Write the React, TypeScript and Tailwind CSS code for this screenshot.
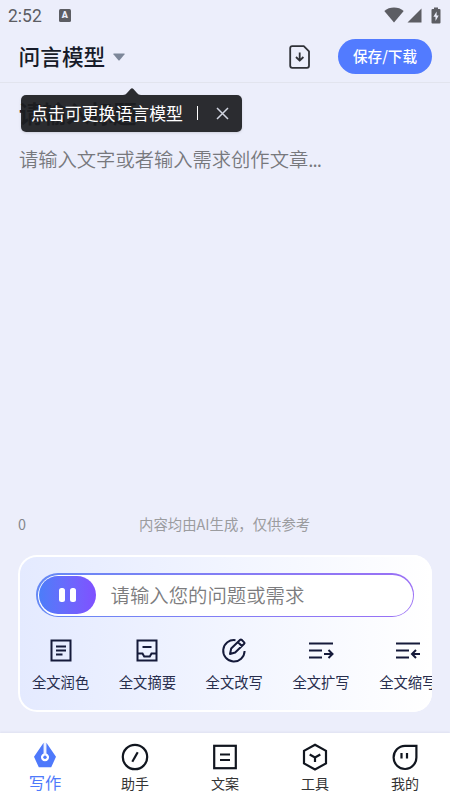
import React from 'react';

const ChevronFill = () => (
  <svg width="12" height="8" viewBox="0 0 12 8" fill="#7d8799">
    <path d="M0.8 0.5h10.4a.5.5 0 0 1 .4.8L6.6 7.2a.8.8 0 0 1-1.2 0L.4 1.3A.5.5 0 0 1 .8.5z" />
  </svg>
);

const StatusBar = () => {
  return (
    <div className="flex h-[30px] items-center pl-2 pr-[9px] text-[#5c5d63]">
      <span className="mt-[3px] font-[Roboto] text-[17.5px] leading-none">2:52</span>
      <div className="ml-[17px] flex h-[13px] w-3 items-center justify-center rounded-[1.5px] bg-[#5c5d63]">
        <span className="font-[Roboto] text-[9px] font-black leading-none text-[#eceefb]">A</span>
      </div>
      <div className="ml-auto flex items-center">
        <svg width="20" height="16" viewBox="0 0 20 16" fill="currentColor">
          <path d="M10 15.5L.3 3.9C3 1.7 6.3.5 10 .5s7 1.2 9.7 3.4z" />
        </svg>
        <svg className="ml-[3px]" width="15" height="15" viewBox="0 0 15 15" fill="currentColor">
          <path d="M14.5 .5v14H.5z" />
        </svg>
        <svg className="ml-[9px]" width="10" height="17" viewBox="0 0 10 17" fill="currentColor">
          <path d="M3 .5h4v1.5h1.5q1 0 1 1v12.5q0 1-1 1h-7q-1 0-1-1V3q0-1 1-1H3z" />
          <path d="M5.6 4.5L2.400 9.800h2.100v4.200l3.200-5.500H5.600z" fill="#eceefb" />
        </svg>
      </div>
    </div>
  );
};

const Header = () => {
  return (
    <header className="relative flex h-[53px] items-center border-b border-[#e2e4ee] pl-[18.5px] pr-[18px]">
      <h1 className="text-[21.7px] font-medium leading-none text-[#171b29]">问言模型</h1>
      <div className="ml-[7.5px] mt-px">
        <ChevronFill />
      </div>
      <svg className="ml-auto mt-px" width="22" height="24" viewBox="0 0 22 24" fill="none" stroke="#303238" strokeWidth="1.8" strokeLinejoin="round">
        <path d="M3.2 1.2h11.600l5.200 5.200v14.400q0 2-2 2H3.200q-2 0-2-2V3.200q0-2 2-2z" />
        <path d="M10.700 7.500v8M7 12l3.700 3.700L14.400 12" />
      </svg>
      <button className="ml-[27px] h-[35px] w-[94px] rounded-full bg-[#527bff] pt-px text-[14.6px] font-medium leading-none text-white">
        保存/下载
      </button>

      {/* Model switch hint */}
      <div className="absolute left-[21px] top-[65px] z-10 flex h-[37px] w-[221px] items-center rounded-[5px] bg-[#1c1d20]/93 pb-px pl-[10px] shadow-sm">
        <svg className="absolute -top-[7px] left-[102px]" width="18" height="7" viewBox="0 0 18 7" fill="#1c1d20" fillOpacity="0.93">
          <path d="M0 7c2 0 3-1 4-2l3.600-4Q9-.5 10.400 1L14 5c1 1 2 2 4 2z" />
        </svg>
        <span className="text-[16.9px] leading-none text-white">点击可更换语言模型</span>
        <span className="ml-[14px] h-[14px] w-px bg-white" />
        <svg className="ml-[18px]" width="13" height="13" viewBox="0 0 13 13" stroke="#d2d6e2" strokeWidth="1.5">
          <path d="M1 1l11 11M12 1L1 12" />
        </svg>
      </div>
    </header>
  );
};

const tools = [
  {
    label: '全文润色',
    icon: (
      <>
        <rect x="2.5" y="2.5" width="19" height="20" />
        <path d="M7 8.500h10M7 12.500h10M7 16.500h6.500" />
      </>
    ),
  },
  {
    label: '全文摘要',
    icon: (
      <>
        <rect x="2.5" y="2.5" width="19" height="20" />
        <path d="M7.500 9h9M2.500 15.500h5l1.700 3h5.600l1.700-3h5" />
      </>
    ),
  },
  {
    label: '全文改写',
    icon: (
      <>
        <path d="M13.500 2.200A10.700 10.700 0 1 0 22.600 13" />
        <path d="M8 16l1.200-5.500 9-8.700q.7-.7 1.400 0l2.600 2.600q.7.7 0 1.400l-9 8.700zM15.800 4l4.300 4.300" strokeLinejoin="round" />
      </>
    ),
  },
  {
    label: '全文扩写',
    icon: (
      <>
        <path d="M0 5.500h24M0 12.500h13M0 19.500h13" />
        <path d="M15 16h8.500M19.500 12l4 4-4 4" />
      </>
    ),
  },
  {
    label: '全文缩写',
    icon: (
      <>
        <path d="M0 5.500h24M0 12.500h13M0 19.500h13" />
        <path d="M24 16h-8M20 12l-4 4 4 4" />
      </>
    ),
  },
];

const PromptPanel = () => {
  return (
    <section className="mx-[18px] h-[157px] overflow-hidden rounded-[19px] bg-gradient-to-r from-[#e4eaff] to-white pt-[18px] shadow-[inset_0_0_0_2px_white]">
      <div className="ml-[18px] h-[44px] w-[378px] rounded-full bg-gradient-to-r from-[#6589f5] to-[#9a70f5] p-[1.5px]">
        <div className="flex h-full items-center rounded-full bg-white pl-[1.5px]">
          <div className="flex h-[38px] w-[57px] items-center justify-center gap-[5px] rounded-full bg-gradient-to-r from-[#4b7df9] to-[#7f50ff]">
            <span className="h-[14px] w-[6px] rounded-[2.5px] bg-white" />
            <span className="h-[14px] w-[6px] rounded-[2.5px] bg-white" />
          </div>
          <span className="ml-[14.5px] pb-px text-[19.4px] font-[350] leading-none text-[#7c7c7e]">请输入您的问题或需求</span>
        </div>
      </div>
      <div className="-ml-[0.8px] mt-[20px] flex w-[435px]">
        {tools.map((tool) => (
          <div key={tool.label} className="flex w-[86.8px] shrink-0 flex-col items-center">
            <svg width="26" height="26" viewBox="-1 -1 26 26" fill="none" stroke="#151a3a" strokeWidth="2">
              {tool.icon}
            </svg>
            <span className="mt-[12px] whitespace-nowrap text-[14.3px] leading-none text-[#272d4d]">{tool.label}</span>
          </div>
        ))}
      </div>
    </section>
  );
};

const tabs = [
  {
    label: '助手',
    icon: (
      <>
        <circle cx="14" cy="14" r="12.2" />
        <path d="M16.700 9.300l-5.400 9.400" />
      </>
    ),
  },
  {
    label: '文案',
    icon: (
      <>
        <rect x="3.2" y="2.8" width="21.6" height="22.4" />
        <path d="M9 11.500h10M9 17h10" />
      </>
    ),
  },
  {
    label: '工具',
    icon: (
      <>
        <path d="M14 1.800l11 6v12.600l-11 6-11-6V7.800z" />
        <path d="M8.700 11.500l5.300 3 5.300-3M14 14.500v4.500" />
      </>
    ),
  },
  {
    label: '我的',
    icon: (
      <>
        <path d="M14 2.800h11.400V14A11.400 11.600 0 1 1 14 2.800z" />
        <path d="M10.500 10v5.500M16 10v5.500" />
      </>
    ),
  },
];

const TabBar = () => {
  return (
    <nav className="grid h-[68px] grid-cols-5 bg-white shadow-[0_-1px_2px_rgba(70,75,110,0.08)]">
      <div className="flex flex-col items-center pt-[9px] text-[#4e79fb]">
        <svg width="24" height="26" viewBox="0 0 24 26" fill="currentColor">
          <path d="M10.600 .8L1 14.800 5.800 25.300h12.400L23 14.800 13.400 .8v10.700a4 4 0 1 1-2.800 0z" />
          <path d="M11.500 .5h1v13h-1z" fillOpacity="0.2" />
          <circle cx="12" cy="15.3" r="1.7" />
        </svg>
        <span className="mt-[5.5px] text-[16.3px] leading-none">写作</span>
      </div>
      {tabs.map((tab) => (
        <div key={tab.label} className="flex flex-col items-center pt-[10px]">
          <svg width="28" height="28" viewBox="0 0 28 28" fill="none" stroke="#11161f" strokeWidth="2.2">
            {tab.icon}
          </svg>
          <span className="mt-[5px] text-[14px] leading-none text-[#333333]">{tab.label}</span>
        </div>
      ))}
    </nav>
  );
};

export default function App() {
  return (
    <div className="flex h-[801px] w-[450px] flex-col overflow-hidden bg-[#eceefb] font-['Noto_Sans_CJK_SC',sans-serif]">
      <StatusBar />
      <Header />
      <main className="flex flex-1 flex-col px-[19px] pt-[19px]">
        <h2 className="text-[23.5px] font-bold leading-none text-[#22242a]">请输入标题</h2>
        <p className="mt-[24px] text-[19.3px] font-[350] leading-none text-[#77787d]">
          请输入文字或者输入需求创作文章<span className="tracking-[-0.9px]">...</span>
        </p>
      </main>
      <div className="relative mb-[23px] flex h-4 items-center pl-[18px] text-[14.4px] leading-none">
        <span className="text-[#85878c]">0</span>
        <span className="absolute left-[139px] text-[#9b9c9f]">内容均由AI生成，仅供参考</span>
      </div>
      <PromptPanel />
      <div className="h-[21px] shrink-0" />
      <TabBar />
    </div>
  );
}
